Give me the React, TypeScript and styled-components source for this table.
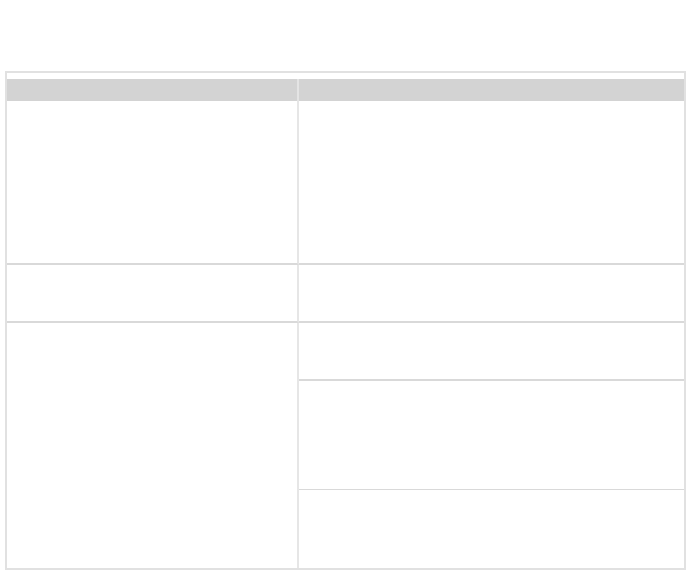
import styled, { createGlobalStyle } from "styled-components";

const Global = createGlobalStyle`
  body {
    margin: 0;
    background: #ffffff;
    font-family: "Liberation Sans", Arial, sans-serif;
  }
`

const Page = styled.div`
  padding: 71px 0 0 5px;
  width: 686px;
  box-sizing: border-box;
`
const Frame = styled.div`
  width: 681px;
  box-sizing: border-box;
  border: 2px solid #e1e1e1;
  padding-top: 6px;
`
const HeaderRow = styled.div`
  display: grid;
  grid-template-columns: 292px 1fr;
  height: 22px;
  background: #d3d3d3;
`
const HeaderCell = styled.div<{ $divider?: boolean }>`
  border-right: ${(p) => (p.$divider ? "2px solid #e4e4e4" : "none")};
`
const Body = styled.div`
  display: grid;
  grid-template-columns: 292px 1fr;
`
const Cell = styled.div<{ $h?: number; $line?: number; $span?: number }>`
  height: ${(p) => (p.$h ? `${p.$h}px` : "auto")};
  border-bottom: ${(p) => (p.$line ? `${p.$line}px solid #d9d9d9` : "none")};
  grid-row: ${(p) => (p.$span ? `span ${p.$span}` : "auto")};
`
const LeftCell = styled(Cell)`
  border-right: 2px solid #e6e6e6;
`
const Stack = styled.div`
  display: flex;
  flex-direction: column;
`

export default function App() {
  return (
    <>
      <Global />
      <Page>
        <Frame>
          <HeaderRow>
            <HeaderCell $divider />
            <HeaderCell />
          </HeaderRow>
          <Body>
            <LeftCell $h={162} $line={2} />
            <Cell $h={162} $line={2} />
            <LeftCell $h={56} $line={2} />
            <Cell $h={56} $line={2} />
            <LeftCell $h={245} />
            <Stack>
              <Cell $h={56} $line={2} />
              <Cell $h={108} $line={1} />
              <Cell $h={76} />
            </Stack>
          </Body>
        </Frame>
      </Page>
    </>
  )
}
